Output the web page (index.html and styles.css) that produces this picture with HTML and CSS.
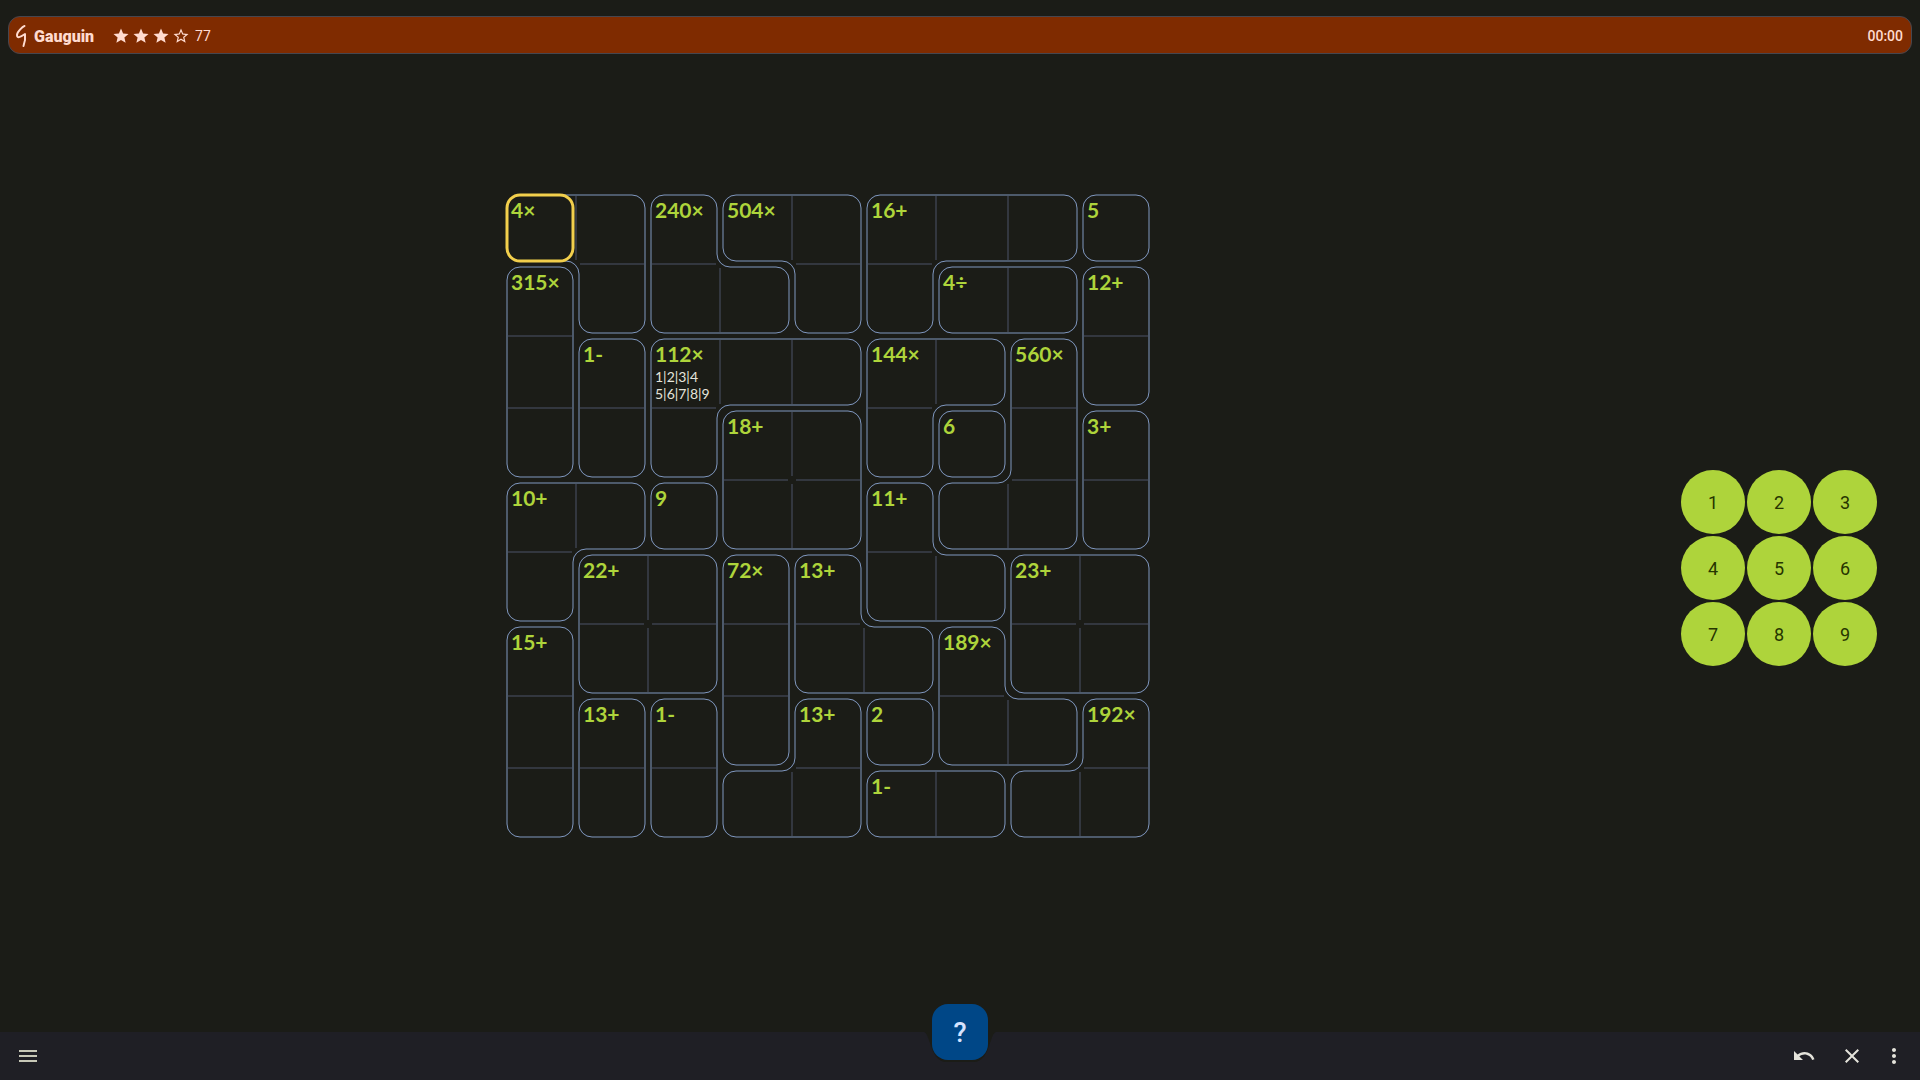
FILE: index.html
```html
<!DOCTYPE html>
<html lang="en">
<head>
<meta charset="utf-8">
<title>Gauguin</title>
<link rel="stylesheet" href="styles.css">
</head>
<body>
<header class="topbar">
  <svg class="logo" viewBox="0 0 12 24" aria-hidden="true"><path d="M8.500 2C6.500 2.500 1 8 1 11C1 14.500 4 13.500 9 10C9.500 14 9 18 7.500 22"/></svg>
  <h1 class="title">Gauguin</h1>
  <div class="rating">
    <svg class="star" viewBox="0 0 24 24" aria-hidden="true"><path d="M12 17.270L18.180 21l-1.640-7.030L22 9.240l-7.190-.61L12 2 9.190 8.630 2 9.240l5.460 4.730L5.820 21z"/></svg>
    <svg class="star" viewBox="0 0 24 24" aria-hidden="true"><path d="M12 17.270L18.180 21l-1.640-7.030L22 9.240l-7.190-.61L12 2 9.190 8.630 2 9.240l5.460 4.730L5.820 21z"/></svg>
    <svg class="star" viewBox="0 0 24 24" aria-hidden="true"><path d="M12 17.270L18.180 21l-1.640-7.030L22 9.240l-7.190-.61L12 2 9.190 8.630 2 9.240l5.460 4.730L5.820 21z"/></svg>
    <svg class="star" viewBox="0 0 24 24" aria-hidden="true"><path d="M22 9.240l-7.190-.62L12 2 9.190 8.630 2 9.240l5.460 4.730L5.820 21 12 17.270 18.180 21l-1.630-7.030L22 9.240zM12 15.400l-3.760 2.270 1-4.280-3.320-2.880 4.380-.38L12 6.100l1.710 4.040 4.380.38-3.320 2.880 1 4.280L12 15.400z"/></svg>
    <span class="score">77</span>
  </div>
  <time class="timer">00:00</time>
</header>
<main class="game">
  <section class="board-area">
    <div class="board" id="board">
      <svg class="outlines" id="outlines" viewBox="0 0 648 648" aria-hidden="true"></svg>
    </div>
  </section>
  <aside class="keypad">
    <button class="key">1</button><button class="key">2</button><button class="key">3</button>
    <button class="key">4</button><button class="key">5</button><button class="key">6</button>
    <button class="key">7</button><button class="key">8</button><button class="key">9</button>
  </aside>
</main>
<footer class="bottombar">
  <button class="icon-button" aria-label="Menu"><svg viewBox="0 0 24 24"><path d="M3 18h18v-2H3zM3 13h18v-2H3zM3 8h18V6H3z"/></svg></button>
  <div class="hint-slot">
    <svg class="notch" viewBox="0 0 72 32" aria-hidden="true"><path d="M0 0h72C69 1 68 6 66 11C63 22 58 30 50 30H22C14 30 9 22 6 11C4 6 3 1 0 0z"/></svg>
    <button class="hint">?</button>
  </div>
  <div class="actions">
    <button class="icon-button" aria-label="Undo"><svg viewBox="0 0 24 24"><path d="M12.500 8c-2.650 0-5.050.990-6.900 2.600L2 7v9h9l-3.620-3.620c1.390-1.160 3.160-1.880 5.120-1.880 3.540 0 6.550 2.310 7.600 5.500l2.370-.780C21.080 11.030 17.150 8 12.500 8z"/></svg></button>
    <button class="icon-button" aria-label="Close"><svg viewBox="0 0 24 24"><path d="M19 6.410L17.590 5 12 10.590 6.410 5 5 6.410 10.590 12 5 17.590 6.410 19 12 13.410 17.590 19 19 17.590 13.410 12z"/></svg></button>
    <button class="icon-button more" aria-label="More"><svg viewBox="0 0 24 24"><path d="M12 8c1.100 0 2-.9 2-2s-.9-2-2-2-2 .9-2 2 .9 2 2 2zm0 2c-1.100 0-2 .9-2 2s.9 2 2 2 2-.9 2-2-.9-2-2-2zm0 6c-1.100 0-2 .9-2 2s.9 2 2 2 2-.9 2-2-.9-2-2-2z"/></svg></button>
  </div>
</footer>
<script src="board.js"></script>
</body>
</html>
```
FILE: styles.css
```css
* { box-sizing: border-box; }

body {
  margin: 0;
  min-height: 100vh;
  display: flex;
  flex-direction: column;
  background: #1b1c17;
  color: #e4e3db;
  font-family: Roboto, sans-serif;
}

button {
  border: 0;
  padding: 0;
  background: none;
  color: inherit;
  font-family: inherit;
  cursor: pointer;
}

.topbar {
  display: flex;
  align-items: center;
  height: 38px;
  margin: 16px 8px 0;
  padding: 2px 8px 0 7px;
  border: 1px solid #46464f;
  border-radius: 12px;
  background: #7f2b00;
  color: #ffdbcf;
}

.logo {
  width: 12px;
  height: 24px;
  margin-right: 6px;
  fill: none;
  stroke: #ffdbcf;
  stroke-width: 2;
  stroke-linejoin: round;
  stroke-linecap: round;
}

.title { margin: 0; font-size: 16px; font-weight: 900; }

.rating { display: flex; align-items: center; margin-left: 18px; }
.star { width: 18px; height: 18px; margin-right: 2px; fill: #ffdbcf; }
.score { margin-left: 3px; font-size: 14px; }
.timer { margin-left: auto; font-size: 14px; font-weight: 500; }

.game {
  flex: 1;
  display: flex;
  padding-bottom: 54px;
}

.board-area {
  flex: 1;
  display: flex;
  align-items: center;
  justify-content: center;
}

.board {
  position: relative;
  display: grid;
  grid-template-columns: repeat(9, 72px);
  grid-auto-rows: 72px;
  font-family: Lato, sans-serif;
}

.outlines {
  position: absolute;
  inset: 0;
  width: 100%;
  height: 100%;
  overflow: visible;
  fill: none;
}

.cage { stroke: #8098c0; stroke-width: 1; }
.divider { stroke: #33373f; stroke-width: 2; }
.selection { stroke: #f2cf4c; stroke-width: 3; }

.cell { padding: 5px 0 0 7px; }
.result {
  display: block;
  line-height: 26px;
  font-size: 21px;
  font-weight: 700;
  color: #aed43b;
}
.notes { display: block; padding-top: 1px; font-size: 14px; line-height: 17px; white-space: pre; }

.keypad {
  width: 264px;
  padding: 104px 0 0 25px;
  display: grid;
  grid-template-columns: repeat(3, 64px);
  grid-auto-rows: 64px;
  gap: 2px;
  align-content: center;
}

.key {
  border-radius: 50%;
  background: #aed43b;
  color: #263500;
  font-size: 18px;
}

.bottombar {
  display: grid;
  grid-template-columns: 1fr 72px 1fr;
  align-items: center;
  height: 48px;
  background: #1f1f25;
}

.icon-button { width: 24px; height: 24px; margin-left: 16px; fill: #e4e3db; }
.icon-button svg { display: block; width: 24px; height: 24px; }
.bottombar > .icon-button { fill: #c7c8b7; }

.hint-slot { position: relative; height: 48px; }
.notch { position: absolute; left: 0; top: 0; width: 72px; height: 32px; fill: #1b1c17; }
.hint {
  position: absolute;
  left: 8px;
  top: -28px;
  width: 56px;
  height: 56px;
  padding-top: 2px;
  border-radius: 16px;
  background: #004787;
  color: #d5e3ff;
  font-size: 27px;
  font-weight: 500;
}

.actions { display: flex; justify-content: flex-end; gap: 8px; padding-right: 14px; }
.actions .more { margin-left: 10px; }
```
FILE: board.js
```js
const CELL = 72, INSET = 3, RADIUS = 13;
const cages = [
  'AABCCDDDE',
  'FABBCDGGH',
  'FIJJJKKLH',
  'FIJMMKNLO',
  'PPQMMRLLO',
  'PSSTURRVV',
  'WSSTUUXVV',
  'WYZTabXXc',
  'WYZaaddcc'
];
const results = {
  A: '4×', B: '240×', C: '504×', D: '16+', E: '5', F: '315×', G: '4÷', H: '12+', I: '1-',
  J: '112×', K: '144×', L: '560×', M: '18+', N: '6', O: '3+', P: '10+', Q: '9', R: '11+',
  S: '22+', T: '72×', U: '13+', V: '23+', W: '15+', X: '189×', Y: '13+', Z: '1-',
  a: '13+', b: '2', c: '192×', d: '1-'
};
const notes = { J: '1|2|3|4\n5|6|7|8|9' };
const board = document.getElementById('board');
const outlines = document.getElementById('outlines');
const at = (x, y) => (cages[y] || '')[x];

function draw(className, d) {
  const path = document.createElementNS('http://www.w3.org/2000/svg', 'path');
  path.setAttribute('class', className);
  path.setAttribute('d', d);
  outlines.appendChild(path);
}

// Walks the border of a cage clockwise and returns its rounded, inset outline.
function outline(id) {
  const next = new Map();
  cages.forEach((row, y) => [...row].forEach((c, x) => {
    if (c !== id) return;
    if (at(x, y - 1) !== id) next.set(`${x},${y}`, [1, 0]);
    if (at(x + 1, y) !== id) next.set(`${x + 1},${y}`, [0, 1]);
    if (at(x, y + 1) !== id) next.set(`${x + 1},${y + 1}`, [-1, 0]);
    if (at(x - 1, y) !== id) next.set(`${x},${y + 1}`, [0, -1]);
  }));
  let [x, y] = next.keys().next().value.split(',').map(Number);
  let previous = [0, -1], d = '';
  for (let i = 0; i < next.size; i++) {
    const dir = next.get(`${x},${y}`);
    if (dir[0] !== previous[0] || dir[1] !== previous[1]) {
      const px = x * CELL - INSET * (dir[1] + previous[1]);
      const py = y * CELL + INSET * (dir[0] + previous[0]);
      const sweep = previous[0] * dir[1] - previous[1] * dir[0] > 0 ? 1 : 0;
      d += `${d ? 'L' : 'M'}${px - previous[0] * RADIUS} ${py - previous[1] * RADIUS}`;
      d += `A${RADIUS} ${RADIUS} 0 0 ${sweep} ${px + dir[0] * RADIUS} ${py + dir[1] * RADIUS}`;
    }
    previous = dir;
    x += dir[0];
    y += dir[1];
  }
  return d + 'Z';
}

const seen = new Set();
cages.forEach((row, y) => [...row].forEach((id, x) => {
  const cell = document.createElement('div');
  cell.className = 'cell';
  if (!seen.has(id)) {
    const result = document.createElement('span');
    result.className = 'result';
    result.textContent = results[id];
    cell.append(result);
    if (notes[id]) {
      const note = document.createElement('span');
      note.className = 'notes';
      note.textContent = notes[id];
      cell.append(note);
    }
    seen.add(id);
  }
  board.append(cell);
  const left = x * CELL, top = y * CELL;
  if (at(x + 1, y) === id) draw('divider', `M${left + 72} ${top + 4}v64`);
  if (at(x, y + 1) === id) draw('divider', `M${left + 4} ${top + 72}h64`);
}));
seen.forEach(id => draw('cage', outline(id)));
draw('selection', 'M16 3H56A13 13 0 0 1 69 16V56A13 13 0 0 1 56 69H16A13 13 0 0 1 3 56V16A13 13 0 0 1 16 3Z');
```
